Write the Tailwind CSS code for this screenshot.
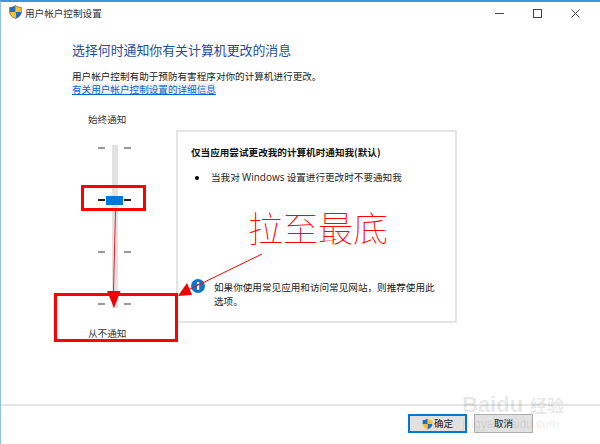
<!DOCTYPE html>
<html lang="zh-CN">
<head>
  <meta charset="UTF-8">
  <title>用户帐户控制设置</title>
  <script src="https://cdn.jsdelivr.net/npm/@tailwindcss/browser@4"></script>
</head>
<body class="bg-white">
  <div class="relative w-[600px] h-[444px] overflow-hidden flex flex-col bg-white border-t-2 border-t-[#3a96dd] border-l border-l-[#8cc4ec] font-['Noto_Sans_CJK_SC','Liberation_Sans',sans-serif] text-[9.6px] leading-[13px] text-[#222]">

    <!-- title bar -->
    <div class="flex items-center h-[22px] shrink-0 pl-[8px]">
      <svg class="w-[13px] h-[14px] -mt-[2px]" viewBox="0 0 13 14">
        <path d="M6.5 0.5C8 1.8 10 2.4 12.3 2.5V7H6.5z" fill="#f4c430"/>
        <path d="M6.5 7h5.800c0 3-2.400 5.300-5.800 6.500z" fill="#1f6fc4"/>
        <path d="M0.700 7H6.500V13.500C3.100 12.300 0.700 10 0.700 7z" fill="#f4c430"/>
        <path d="M6.500 0.500C5 1.800 3 2.400 0.700 2.500V7H6.500z" fill="#1f6fc4"/>
        <path d="M6.500 0.500C8 1.800 10 2.400 12.300 2.500V7c0 3-2.400 5.300-5.800 6.500C3.100 12.300 0.700 10 0.700 7V2.500C3 2.400 5 1.800 6.500 0.500z" fill="none" stroke="#444" stroke-width="0.600"/>
      </svg>
      <span class="ml-[3px] text-[#333]">用户帐户控制设置</span>
      <div class="ml-auto flex items-center gap-[29px] pr-[20px]">
        <svg class="w-[9px] h-[9px]" viewBox="0 0 9 9"><path d="M0 4.500h9" stroke="#444" stroke-width="1"/></svg>
        <svg class="w-[9px] h-[9px]" viewBox="0 0 9 9"><rect x="0.500" y="0.500" width="8" height="8" fill="none" stroke="#444"/></svg>
        <svg class="w-[9px] h-[9px]" viewBox="0 0 9 9"><path d="M0.500 0.500l8 8M8.500 0.500l-8 8" stroke="#444" stroke-width="1"/></svg>
      </div>
    </div>

    <!-- header text -->
    <div class="pl-[71px] pt-[17px] shrink-0">
      <h1 class="text-[12.9px] leading-[18px] font-normal text-[#1f4e9c]">选择何时通知你有关计算机更改的消息</h1>
      <p class="mt-[11px]">用户帐户控制有助于预防有害程序对你的计算机进行更改。</p>
      <a class="block w-fit underline text-[#0a66c8] bg-[#f1f1f1]">有关用户帐户控制设置的详细信息</a>
    </div>

    <!-- slider + panel -->
    <div class="flex pl-[87px] pt-[17px] shrink-0">
      <div class="w-[43px] flex flex-col text-[#333]">
        <span class="h-[13px]">始终通知</span>
        <div class="relative w-[33px] h-[163px] mt-[19px] ml-[10px] flex justify-center">
          <div class="w-[6px] h-full bg-[#e2e2e2]"></div>
          <div class="absolute inset-x-0 top-[2px] h-[158px] flex flex-col justify-between">
            <div class="flex justify-between items-center h-[2px]"><i class="w-[7px] h-[2px] bg-[#999]"></i><i class="w-[7px] h-[2px] bg-[#999]"></i></div>
            <div class="flex justify-between items-center h-[2px]"><i class="w-[7px] h-[2px] bg-[#222]"></i><i class="w-[7px] h-[2px] bg-[#222]"></i></div>
            <div class="flex justify-between items-center h-[2px]"><i class="w-[7px] h-[2px] bg-[#999]"></i><i class="w-[7px] h-[2px] bg-[#999]"></i></div>
            <div class="flex justify-between items-center h-[2px]"><i class="w-[7px] h-[2px] bg-[#999]"></i><i class="w-[7px] h-[2px] bg-[#999]"></i></div>
          </div>
          <div class="absolute left-[8px] top-[51px] w-[17px] h-[9px] bg-[#0078d7]"></div>
        </div>
        <span class="h-[13px] mt-[19px]">从不通知</span>
      </div>

      <div class="w-[281px] h-[193px] mt-[17px] ml-[45px] border-2 border-[#e4e4e4] flex flex-col pl-[13px] pr-[18px] pt-[14px] pb-[13px]">
        <h2 class="font-bold text-[#111]">仅当应用尝试更改我的计算机时通知我(默认)</h2>
        <div class="flex items-center mt-[12px]">
          <i class="w-[4px] h-[4px] ml-[4px] rounded-full bg-black"></i>
          <span class="ml-[12px]">当我对 <span class="font-['Open_Sans',sans-serif] text-[10px]">Windows</span> 设置进行更改时不要通知我</span>
        </div>
        <div class="flex mt-auto">
          <svg class="w-[14px] h-[14px] shrink-0 mt-[-1px]" viewBox="0 0 14 14">
            <circle cx="7" cy="7" r="7" fill="#1173c9"/>
            <rect x="6" y="6" width="2.200" height="5" fill="#fff"/>
            <rect x="6" y="3" width="2.200" height="2" fill="#fff"/>
          </svg>
          <p class="ml-[9px] leading-[14px]">如果你使用常见应用和访问常见网站，则推荐使用此选项。</p>
        </div>
      </div>
    </div>

    <!-- footer -->
    <div class="mt-auto border-t-2 border-[#e4e4e4] h-[40px] shrink-0 flex justify-end gap-[7px] pt-[8px] pr-[67px]">
      <button class="w-[59px] h-[19px] border-2 border-[#0078d7] bg-[#e1e1e1] flex items-center justify-center text-[#222]">
        <svg class="w-[11px] h-[12px]" viewBox="0 0 13 14">
          <path d="M6.500 0.500C8 1.800 10 2.400 12.300 2.500V7H6.500z" fill="#f4c430"/>
          <path d="M6.500 7h5.800c0 3-2.400 5.300-5.800 6.500z" fill="#1f6fc4"/>
          <path d="M0.700 7H6.500V13.500C3.100 12.300 0.700 10 0.700 7z" fill="#f4c430"/>
          <path d="M6.500 0.500C5 1.800 3 2.400 0.700 2.500V7H6.500z" fill="#1f6fc4"/>
        </svg>
        <span class="ml-px">确定</span>
      </button>
      <button class="w-[59px] h-[19px] border border-[#adadad] bg-[#e1e1e1] text-[#222]">取消</button>
    </div>

    <!-- annotations over the screenshot -->
    <div class="absolute left-[80px] top-[183px] w-[65px] h-[26px] border-[3px] border-[#ff0000]"></div>
    <div class="absolute left-[53px] top-[291px] w-[124px] h-[49px] border-[3px] border-[#ff0000]"></div>
    <span class="absolute left-[247px] top-[204px] text-[35px] leading-[42px] font-thin text-[#ff0000] font-['Noto_Sans_CJK_SC',serif]">拉至最底</span>
    <svg class="absolute -left-px -top-[2px] w-[600px] h-[444px]" viewBox="0 0 600 444">
      <path d="M115.500 210L113.500 292" stroke="#ee1c25" stroke-width="1" fill="none"/>
      <path d="M107 291H120.500L114 308z" fill="#f00000"/>
      <path d="M262 254L188 290" stroke="#ff0000" stroke-width="1" fill="none"/>
      <path d="M178 296L187 283L192 295z" fill="#f00000"/>
    </svg>

    <!-- watermark -->
    <div class="absolute left-[461px] top-[392px] text-[#000]/10 text-[22px] leading-[22px] font-bold font-['Liberation_Sans',sans-serif]">Baidu</div>
    <div class="absolute left-[529px] top-[393px] text-[#000]/10 text-[17px] leading-[20px] font-bold">经验</div>
    <div class="absolute left-[461px] top-[416px] text-[#000]/10 text-[12px] leading-[13px] font-['Liberation_Sans',sans-serif]">jingyan.baidu.com</div>
  </div>
</body>
</html>
